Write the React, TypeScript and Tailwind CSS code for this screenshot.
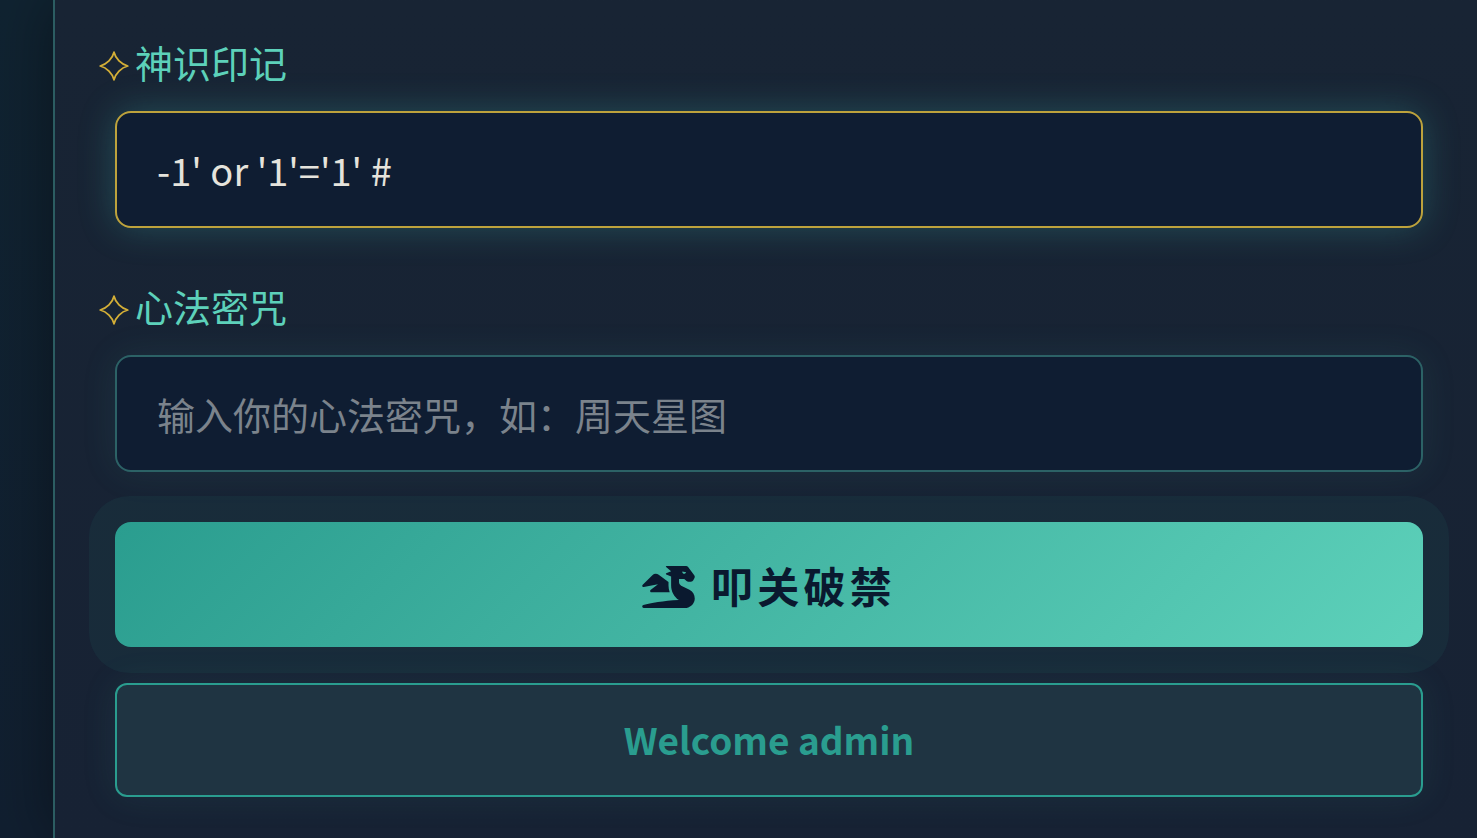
import { FormEvent, useState } from "react";
import { FaDragon } from "react-icons/fa";

type FieldProps = {
  id: string;
  label: string;
  type?: string;
  placeholder: string;
  value: string;
  active?: boolean;
  onChange: (value: string) => void;
};

const idleField =
  "border-[#2c6266] shadow-[0_0_36px_rgba(64,180,170,0.1)]";
const activeField =
  "border-[#bda23c] shadow-[0_0_36px_rgba(64,180,170,0.3)]";

function Sparkle() {
  return (
    <svg aria-hidden="true" viewBox="0 0 30 30" className="mt-2 size-[30px] shrink-0" fill="none">
      <path
        d="M15 1.2C16.6 7.8 22.2 13.4 28.8 15C22.2 16.6 16.6 22.2 15 28.8C13.4 22.2 7.8 16.6 1.2 15C7.8 13.4 13.4 7.8 15 1.2Z"
        stroke="#d4af37"
        strokeWidth="1.8"
        strokeLinejoin="round"
      />
    </svg>
  );
}

function Field({ id, label, type = "text", placeholder, value, active, onChange }: FieldProps) {
  return (
    <div className="flex flex-col gap-[21px]">
      <label htmlFor={id} className="-ml-4 flex items-center gap-[6px] leading-14 text-[#5dd1ba]">
        <Sparkle />
        {label}
      </label>
      <input
        id={id}
        type={type}
        placeholder={placeholder}
        value={value}
        onChange={(e) => onChange(e.target.value)}
        className={`h-[117px] w-full rounded-2xl border-2 bg-[#0f1d32] px-10 text-[#e5e3dc] outline-none placeholder:text-[#7b838c] ${
          active ? activeField : idleField
        }`}
      />
    </div>
  );
}

export default function App() {
  const [mark, setMark] = useState("-1' or '1'='1' #");
  const [spell, setSpell] = useState("");

  const submit = (e: FormEvent) => e.preventDefault();

  return (
    <div className="flex min-h-screen overflow-hidden bg-linear-to-b from-[#102331] to-[#111f30] pl-[53px] font-['Noto_Sans_CJK_SC',sans-serif] text-[38px]">
      <main className="min-w-0 grow border-l-2 border-[#2c5d62] bg-linear-to-b from-[#182434] to-[#172234] pt-[34px] pr-[54px] pb-10 pl-[60px] shadow-[0_0_60px_rgba(0,0,0,0.4)]">
        <form onSubmit={submit} className="flex flex-col">
          <div className="flex flex-col gap-[50px]">
            <Field
              id="mark"
              label="神识印记"
              placeholder="输入你的神识印记"
              value={mark}
              active
              onChange={setMark}
            />
            <Field
              id="spell"
              label="心法密咒"
              type="password"
              placeholder="输入你的心法密咒，如：周天星图"
              value={spell}
              onChange={setSpell}
            />
          </div>
          <button
            type="submit"
            className="mt-[50px] flex h-[125px] w-full items-center justify-center gap-4 rounded-2xl bg-linear-135 from-[#2a9d8f] to-[#5dd1ba] text-[42px] font-bold tracking-widest text-[#0a192f] shadow-[0_0_0_26px_rgba(42,157,143,0.08)]"
          >
            <FaDragon aria-hidden="true" className="mt-1 h-[42px] w-[53px]" />
            叩关破禁
          </button>
        </form>
        <p
          role="status"
          className="mt-9 flex h-[114px] items-center justify-center rounded-xl border-2 border-[#2a9d8f] bg-[#1f3442] text-[37px] font-bold text-[#2a9d8f] shadow-[0_0_36px_rgba(64,180,170,0.1)]"
        >
          Welcome admin
        </p>
      </main>
    </div>
  );
}
